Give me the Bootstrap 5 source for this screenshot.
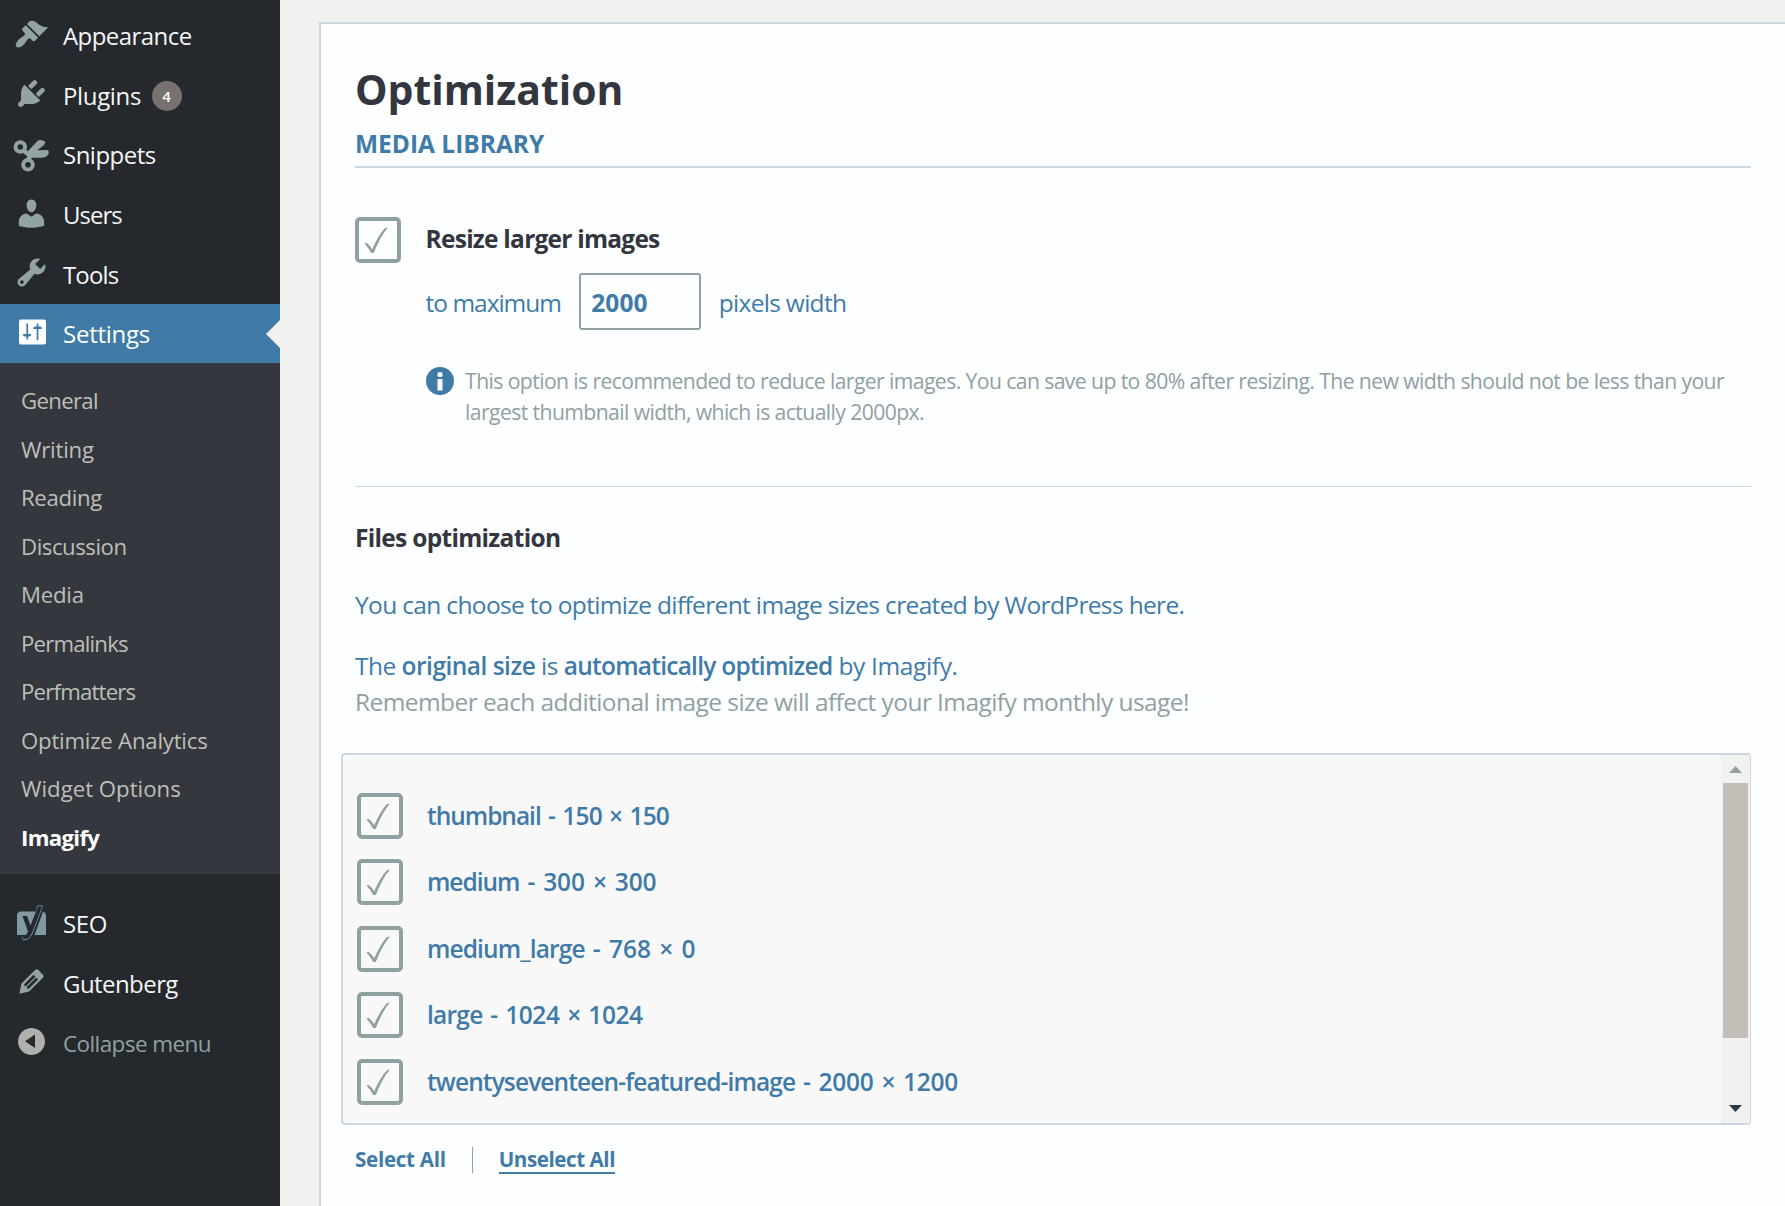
<!DOCTYPE html>
<html lang="en">
<head>
<meta charset="utf-8">
<title>Imagify Settings</title>
<link href="https://cdn.jsdelivr.net/npm/bootstrap@5.3.0/dist/css/bootstrap.min.css" rel="stylesheet">
<style>
body{font-family:"Open Sans","Noto Sans",sans-serif;background:#f1f1ef;height:1206px;overflow:hidden;color:#407ba8}
.side-menu{width:280px;background:#25282c;padding-top:6px;flex:none}
.menu-row{height:59.6px;padding-left:14px;gap:14px;font-size:24px;color:#f4f5f5;text-decoration:none;white-space:nowrap}
.menu-row span{padding-top:1px}
.menu-row svg{width:35px;height:35px;fill:#93a3a3;flex:none;overflow:visible;margin-top:-3px}
.menu-row.current{background:#407ba8;color:#fff;height:59px}
.menu-row.current svg{fill:#fdfeff}
.menu-row.current::after{content:"";position:absolute;right:0;top:16px;border:14px solid transparent;border-right-color:#f1f1ef;border-left:0}
.menu-row.muted-row{color:#90a1a1;font-size:22.5px}
.menu-row .count-pill{width:30px;height:30px;border-radius:50%;background:#77716f;color:#fff;font-size:15px;font-weight:600;margin:1px 0 0 -3.5px;padding:0}
.sub-menu{background:#34373d;height:511px;padding:14.3px 0 0 21px;margin-bottom:20px}
.sub-menu a{display:block;height:48.5px;line-height:48.5px;font-size:22.2px;color:#bdbfb9;text-decoration:none;white-space:nowrap}
.sub-menu a.on{color:#fff;font-weight:700}
.panel-box{margin:22px 0 0 39px;border:2px solid #ccd7e1;border-width:2px 0 0 2px;background:#fdfeff;padding:41px 34px 0;flex:1}
.inkdark{color:#33363e}
h1{font-size:40.9px;line-height:48px;font-weight:700;margin:0}
.sec-title{font-size:24.5px;line-height:34px;font-weight:700;margin:14px 0 49px;padding-bottom:5px;border-bottom:2px solid #ccd7e1}
h3{font-size:24.5px;line-height:36px;font-weight:700;margin:0}
.resize-body{padding:4px 0 0 24.6px}
.files-head{margin:33px 0 31px}
.rule-line{height:1px;background:#ccd7e1}
.txt{font-size:24.5px;line-height:36px;margin:0}
.intro{margin-bottom:25px}
.field-line{margin-top:16px}
.field-line>span{padding-top:2px}
.px-field{width:122px;height:57px;border:2px solid #90a1a1;border-radius:3px;padding:3px 0 0 10px;font-size:24.5px;font-weight:700;color:#407ba8;background:#fdfeff;margin:0 17.4px 0 18.4px}
.tick{width:46px;height:46px;border:4px solid #90a1a1;border-radius:5px;flex:none}
.tick svg{display:block;width:38px;height:38px;fill:#90a1a1}
.hint{margin:35px 0 59px;font-size:21.2px;line-height:31px;color:#90a1a1;gap:11.5px;white-space:nowrap}
.hint svg{width:28px;height:28px;flex:none;margin-top:2px}
.faded{color:#90a1a1}
.size-list{margin:33px 0 0 -14px;height:372px;border:2px solid #ccd7e1;border-right-width:1px;border-radius:4px;background:#f8f8f8;overflow:hidden}
.size-rows{padding:38px 0 0 14px;gap:20.4px}
.size-rows .item{gap:24px;font-size:24.5px;font-weight:600;line-height:45px;white-space:pre}
.bar-track{width:29px;background:#f1f1ef;padding:11px 0 11px}
.bar-thumb{width:25px;height:255px;background:#c3beb7;margin:10px 0 0 -1px}
.links{margin-top:21px;font-size:20.6px;line-height:26px;font-weight:700}
.links a{color:#407ba8;text-decoration:none}
.links a.ul{box-shadow:inset 0 -2px #407ba8}
.links i{width:1px;height:26px;background:#90a1a1;margin:1px 26px}
/* tracking steps, in thousandths of an em */
.k10{letter-spacing:-.01em}.k14{letter-spacing:-.0145em}.k20{letter-spacing:-.021em}.k24{letter-spacing:-.0235em}.k26{letter-spacing:-.0265em}.k28{letter-spacing:-.0285em}.k31{letter-spacing:-.031em}.k36{letter-spacing:-.036em}.k40{letter-spacing:-.0415em}
.w7,.w10,.w17,.w20,.w0{word-spacing:.07em}
.w7{letter-spacing:-.018em}.w10{letter-spacing:-.004em}.w17{letter-spacing:-.034em}.w20{letter-spacing:.003em}.w0{letter-spacing:-.01em}
</style>
<script src="https://cdn.jsdelivr.net/npm/bootstrap@5.3.0/dist/js/bootstrap.bundle.min.js"></script>
</head>
<body class="d-flex">
<nav class="side-menu d-flex flex-column">
<a class="menu-row d-flex align-items-center" href="#"><svg viewBox="0 0 20 20"><path d="M14.48 11.06L7.41 3.99l1.5-1.5c.5-.56 2.3-.47 3.51.32 1.21.8 1.43 1.28 2.91 2.1 1.18.64 2.45 1.26 4.45.85zm-.71.71L6.7 4.7 4.93 6.47c-.39.39-.39 1.02 0 1.41l1.06 1.06c.39.39.39 1.03 0 1.42-.6.6-1.43 1.11-2.21 1.69-.35.26-.7.53-1.01.84C1.43 14.23.4 16.08 1.4 17.07c.99 1 2.84-.03 4.18-1.36.31-.31.58-.66.85-1.02.57-.78 1.08-1.61 1.69-2.21.39-.39 1.02-.39 1.41 0l1.06 1.06c.39.39 1.02.39 1.41 0z"/></svg><span class="k24">Appearance</span></a>
<a class="menu-row d-flex align-items-center" href="#"><svg viewBox="0 0 20 20"><path d="M13.11 4.36L9.87 7.6 8 5.73l3.24-3.24c.35-.34 1.05-.2 1.56.32.52.51.66 1.21.31 1.55zm-8 1.77l.91-1.12 9.01 9.01-1.19.84c-.71.71-2.63 1.16-3.82 1.16H6.14L4.9 17.26c-.59.59-1.54.59-2.12 0-.59-.58-.59-1.53 0-2.12l1.24-1.24v-3.88c0-1.13.4-3.19 1.09-3.89zm7.26 3.97l3.24-3.24c.34-.35 1.04-.21 1.55.31.52.51.66 1.21.31 1.55l-3.24 3.25z"/></svg><span class="k14">Plugins</span><span class="count-pill d-flex align-items-center justify-content-center">4</span></a>
<a class="menu-row d-flex align-items-center" href="#"><svg viewBox="0 0 35 35"><g fill="none" stroke="#93a3a3" stroke-width="4"><circle cx="6.3" cy="11" r="4.8"/><circle cx="14" cy="28.8" r="4.8"/></g><path d="M11 13.5L14 15 24 4.5Q27 3 31 5.5 31.5 8 29 10L23 14.200 34 14Q36 17 33 20 31 21.700 28 21.700L18 21.700 15 25 11 24 13.500 20.500 8 16z"/></svg><span class="k20">Snippets</span></a>
<a class="menu-row d-flex align-items-center" href="#"><svg viewBox="0 0 20 20"><path d="M10 9.250c-2.270 0-2.730-3.440-2.730-3.440C7 4.020 7.820 2 9.970 2c2.160 0 2.980 2.020 2.710 3.810 0 0-.41 3.440-2.680 3.440zm0 2.570L12.720 10c2.390 0 4.520 2.330 4.520 4.530v2.490s-3.650 1.130-7.240 1.130c-3.650 0-7.240-1.130-7.240-1.130v-2.490c0-2.250 1.940-4.480 4.470-4.480z"/></svg><span class="k40">Users</span></a>
<a class="menu-row d-flex align-items-center" href="#"><svg viewBox="0 0 20 20"><path d="M16.680 9.770c-1.340 1.340-3.300 1.670-4.950.99l-5.410 6.520c-.99.99-2.590.99-3.580 0s-.99-2.590 0-3.570l6.520-5.420c-.68-1.650-.35-3.610.99-4.950 1.280-1.280 3.120-1.620 4.720-1.060l-2.890 2.890 2.820 2.820 2.860-2.870c.53 1.580.18 3.390-1.080 4.650zM3.810 16.210c.4.39 1.040.39 1.430 0 .4-.4.4-1.040 0-1.430-.39-.4-1.030-.4-1.430 0-.39.39-.39 1.030 0 1.430z"/></svg><span class="k36">Tools</span></a>
<a class="menu-row current d-flex align-items-center position-relative" href="#"><svg viewBox="0 0 35 35"><path fill-rule="evenodd" d="M7 5.500h23q2 0 2 2v21q0 2-2 2H7q-2 0-2-2v-21q0-2 2-2zM12.400 9.500h1.700v10.500h3v1.500l-1.300 1h-1.700v3h-1.700v-3h-1.700l-1.700-1v-1.500h3.400zM22.700 9.500h1.700v3h1.700l1.700 1v1.500h-3.400v11h-1.700v-11h-3.400v-1.500l1.700-1h1.700z"/></svg><span class="k10">Settings</span></a>
<div class="sub-menu">
<a class="k31" href="#">General</a><a class="k10" href="#">Writing</a><a class="k14" href="#">Reading</a><a class="k20" href="#">Discussion</a><a class="k10" href="#">Media</a><a class="k36" href="#">Permalinks</a><a class="k36" href="#">Perfmatters</a><a class="k10" href="#">Optimize Analytics</a><a href="#">Widget Options</a><a class="on k31" href="#">Imagify</a>
</div>
<a class="menu-row d-flex align-items-center" href="#"><svg viewBox="0 0 35 35"><path fill="#8199a3" d="M7 6.500h18L17 30H3V10.500q0-4 4-4zM29 6.500q3 1 3 4V30H20.500z"/><path fill="none" stroke="#6c9ab8" stroke-width="1" d="M22.500 6L23.500 1h5L18 29Q15.500 35 9 34.800V31"/><path fill="#25282c" d="M8.500 11h4.500l3.500 9.500L24 1.500h4L18 27.500Q15.500 34 9 33.800V30.500Q12.500 31 14 26.500z"/></svg><span class="k14">SEO</span></a>
<a class="menu-row d-flex align-items-center" href="#"><svg viewBox="0 0 20 20"><path d="M13.890 3.390l2.710 2.720c.46.46.42 1.240.03 1.640l-8.010 8.020-5.560 1.160 1.160-5.580s7.600-7.630 7.990-8.030c.39-.39 1.220-.39 1.680.07zm-2.730 2.790l-5.590 5.610 1.110 1.110 5.540-5.650zm-2.970 8.230l5.580-5.600-1.070-1.080-5.590 5.600z"/></svg><span class="k24">Gutenberg</span></a>
<a class="menu-row muted-row d-flex align-items-center" href="#"><svg viewBox="0 0 35 35"><path fill="#aeb1ac" fill-rule="evenodd" d="M17.500 4a13.500 13.500 0 1 0 .01 0zM21 10.500v13.500L11 17.200z"/></svg><span class="k26">Collapse menu</span></a>
</nav>
<main class="panel-box">
<h1 class="inkdark">Optimization</h1>
<h2 class="sec-title">MEDIA LIBRARY</h2>
<div class="d-flex">
<div class="tick"><svg viewBox="0 0 38 38"><path d="M5.500 22.500q1-.8 2.200-.5 3.300 2.500 5.500 6.200Q19 15 25.500 7.500q1.200-1 3.300-.7Q21.500 15 14.800 32h-2.500Q9.500 27 5.500 22.500z"/></svg></div>
<div class="resize-body flex-grow-1">
<h3 class="inkdark k31">Resize larger images</h3>
<div class="field-line txt d-flex align-items-center"><span class="k40">to maximum</span><div class="px-field d-flex align-items-center">2000</div><span class="k28">pixels width</span></div>
<div class="hint d-flex"><svg viewBox="0 0 28 28"><circle cx="14" cy="14" r="14" fill="#407ba8"/><circle cx="14" cy="7.500" r="2.600" fill="#fdfeff"/><path fill="#fdfeff" d="M11.500 12H16.500v11.500h-5z"/></svg><div><span class="k28">This option is recommended to reduce larger images. You can save up to 80% after resizing. The new width should not be less than your</span><br><span class="k28">largest thumbnail width, which is actually 2000px.</span></div></div>
</div>
</div>
<div class="rule-line"></div>
<h3 class="files-head inkdark k28">Files optimization</h3>
<p class="txt intro k26">You can choose to optimize different image sizes created by WordPress here.</p>
<p class="txt k20">The <b class="fw-semibold k20">original size</b> is <b class="fw-semibold k31">automatically optimized</b><span class="k14"> by Imagify.</span></p>
<p class="txt faded k24">Remember each additional image size will affect your Imagify monthly usage!</p>
<div class="size-list d-flex justify-content-between">
<div class="size-rows d-flex flex-column">
<div class="item d-flex"><div class="tick"><svg viewBox="0 0 38 38"><path d="M5.500 22.500q1-.8 2.200-.5 3.300 2.500 5.500 6.200Q19 15 25.500 7.500q1.200-1 3.300-.7Q21.500 15 14.800 32h-2.500Q9.500 27 5.500 22.500z"/></svg></div><div><span class="k40">thumbnail</span><span class="w17"> - 150 × 150</span></div></div>
<div class="item d-flex"><div class="tick"><svg viewBox="0 0 38 38"><path d="M5.500 22.500q1-.8 2.200-.5 3.300 2.500 5.500 6.200Q19 15 25.500 7.500q1.200-1 3.300-.7Q21.500 15 14.800 32h-2.500Q9.500 27 5.500 22.500z"/></svg></div><div><span class="k40">medium</span><span class="w10"> - 300 × 300</span></div></div>
<div class="item d-flex"><div class="tick"><svg viewBox="0 0 38 38"><path d="M5.500 22.500q1-.8 2.200-.5 3.300 2.500 5.500 6.200Q19 15 25.500 7.500q1.200-1 3.300-.7Q21.500 15 14.800 32h-2.500Q9.500 27 5.500 22.500z"/></svg></div><div><span class="k36">medium_large</span><span class="w20"> - 768 × 0</span></div></div>
<div class="item d-flex"><div class="tick"><svg viewBox="0 0 38 38"><path d="M5.500 22.500q1-.8 2.200-.5 3.300 2.500 5.500 6.200Q19 15 25.500 7.500q1.200-1 3.300-.7Q21.500 15 14.800 32h-2.500Q9.500 27 5.500 22.500z"/></svg></div><div><span class="k31">large</span><span class="w7"> - 1024 × 1024</span></div></div>
<div class="item d-flex"><div class="tick"><svg viewBox="0 0 38 38"><path d="M5.500 22.500q1-.8 2.200-.5 3.300 2.500 5.500 6.200Q19 15 25.500 7.500q1.200-1 3.300-.7Q21.500 15 14.800 32h-2.500Q9.500 27 5.500 22.500z"/></svg></div><div><span class="k36">twentyseventeen-featured-image</span><span class="w0"> - 2000 × 1200</span></div></div>
</div>
<div class="bar-track d-flex flex-column align-items-center"><svg width="13" height="7"><path d="M6.500 0L13 7H0z" fill="#90a1a1"/></svg><div class="bar-thumb"></div><svg class="mt-auto" width="13" height="7"><path d="M6.500 7L13 0H0z" fill="#2b3a4b"/></svg></div>
</div>
<div class="links d-flex"><a class="k14" href="#">Select All</a><i></i><a class="ul k20" href="#">Unselect All</a></div>
</main>
</body>
</html>
